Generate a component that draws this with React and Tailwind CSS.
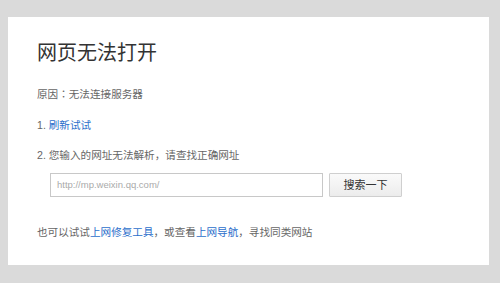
export default function App() {
  const font = { fontFamily: '"Liberation Sans", Arial, "Noto Sans CJK SC", sans-serif' };
  return (
    <div className="w-[500px] h-[283px] bg-[#dadada] pt-[17px] pl-[8px] overflow-hidden" style={font}>
      <div className="w-[481px] h-[248px] bg-white pl-[29px] pt-[27px] text-[#666] text-[10.6px] leading-none">
        <div className="text-[20px] text-[#333] leading-none h-[20px] -mt-[1px]">网页无法打开</div>
        <div className="mt-[26px] h-[11px]">
          原因<span className="font-['Noto_Sans_CJK_JP',sans-serif]">：</span>无法连接服务器
        </div>
        <div className="mt-[20px] h-[11px]">
          1. <a className="text-[#2c6fcb]">刷新试试</a>
        </div>
        <div className="mt-[19px] h-[11px]">2. 您输入的网址无法解析，请查找正确网址</div>
        <div className="mt-[12px] ml-[13px] flex gap-[6px]">
          <div className="w-[273px] h-[24px] border border-[#c8c8c8] flex items-center pl-[6px] text-[9.5px] text-[#aaa]">
            http://mp.weixin.qq.com/
          </div>
          <div className="w-[73px] h-[24px] border border-[#cfcfcf] bg-gradient-to-b from-[#fafafa] to-[#ececec] flex items-center justify-center text-[11px] text-[#333] rounded-[1px]">
            搜索一下
          </div>
        </div>
        <div className="mt-[30px]">
          也可以试试<a className="text-[#2c6fcb]">上网修复工具</a>，或查看<a className="text-[#2c6fcb]">上网导航</a>，寻找同类网站
        </div>
      </div>
    </div>
  );
}
